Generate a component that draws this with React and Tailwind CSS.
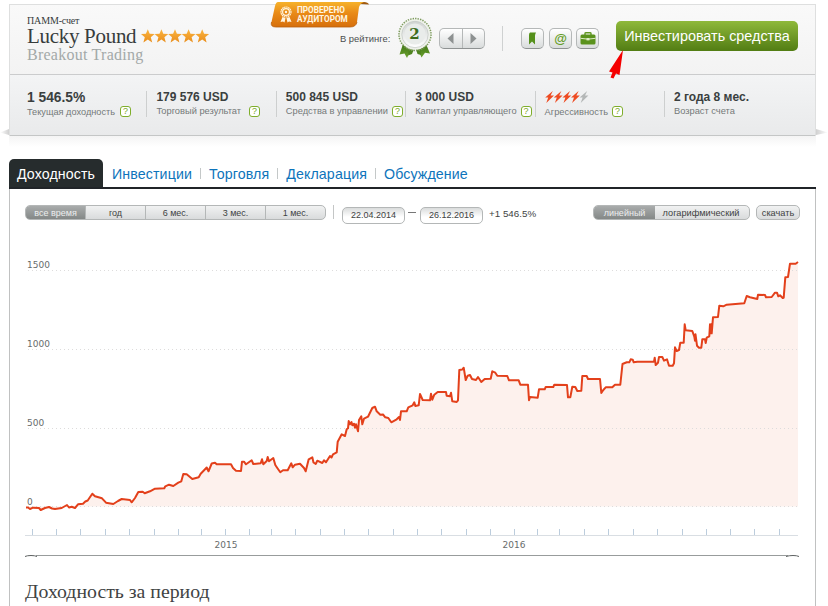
import clsx from 'clsx';

const SANS = "font-['Liberation_Sans',Arial,sans-serif]";
const SERIF = "font-['Liberation_Serif',Georgia,serif]";

const SERIES = `26,507.5 28,507.5 30,509 33,507.7 39,508 40.7,510 45,508 49,507 52,508.5 55,509 61.7,508 67,505 69,507.5 71.7,506.7
75,508 78,504.3 83,503.7 85.3,501.5 87.7,500.5 92.3,493.7 95,496.3 102,498.3 106,502.7 113.3,504 118,501 121.7,499 130,500
131.7,502.3 135,498 138.3,492 142.7,491.7 144.7,493.3 150,491.3 155,488.7 164.3,488.3 165.3,486.3 169,484.7 173.3,486
178.3,482.7 181.3,481.3 183.3,474 186.7,474.3 192.3,479 198.7,477.3 200.7,473.7 206.7,467.5 208.5,471.3 211.7,463.5 215,462.7
216.7,464.3 231,464.3 233,468 236,470.7 241,471 242,461.7 244,461.7 246,464.3 251.7,460.3 253.3,464 260.7,463.3 262,459.3
263.3,464.3 266.7,461 267.7,457 269,461.3 273.3,458 275.3,465 277.3,468 280.3,472.3 283,470.3 287.7,470.3 291.3,463.3
292.7,467.3 295,464.7 300,463.7 304,468 305.7,471.3 308.7,459.3 312.3,457.3 313.5,462.5 315.7,464 317.3,460.7 322.3,463
324,460.3 326,462.3 330,456 331.5,457.5 333,454.3 336.7,452.3 337.7,441.7 341.7,434.3 345,436 346.7,429.3 348,428.3
348.7,421 350,424.3 351.5,422 352.3,425.3 354,423.7 355,427.7 356,424.3 358,431.3 359,420 361.3,416.3 362.3,424.3 364,418.7
368,416.7 372.3,408 375,406.7 376.7,411.3 380.3,414.7 383,414.5 385.3,417.3 388.3,418 391.3,422.3 396.7,419.3 399,417
400,420 401,411.3 406.7,411.3 408.3,407.3 412.7,405.3 414.3,402.3 415.3,406 418.7,405.3 420,394 422.7,400 430,400.3
431,393.7 432.3,399.7 434.3,394.7 437.7,392 446,392 446.7,395.7 450,396.3 451,392.7 452.3,401.3 456.7,402 458,400.3
459.3,370 462.3,369.5 463.7,367.7 465.7,380 467.7,375.7 470,375 472,379 476,380 478,377 481.3,382 484.7,379 490.7,378.7
492.3,371.3 495.3,372.7 497.3,375.7 507.3,376 509,380.3 518.7,380.3 520.3,384.7 528,384.7 529,400.3 530,397 537.7,397.7
539,389.3 544.7,389.3 545.7,387 553.3,387 554.3,384.7 567,385 568,397.3 570.3,397.3 572.3,386.7 575.3,387 577.3,391
581.3,390.7 582.3,376 586.7,376 588,379 600,379 601.3,393 603.3,390 605.7,387.3 612.3,387.3 615,384.7 620.3,384.7
622.5,364 626.7,362.3 629.3,362.3 630.7,359.3 632.7,359.7 633.7,362.3 637.3,361.7 654,361.7 654.7,357.7 655.7,365
658,362.7 659,357 662.3,357 664,360.7 667,359.3 669,365.7 672.7,365.7 674,363.3 675,347.3 676.7,351 679,350 680.3,342.7
683.7,342.7 684.7,324.3 685.7,330.3 692.3,331 694.3,336.7 695,340.7 695.5,334.3 697,345.7 699,347.7 701.3,347.7
702.3,339.3 705,339.3 705.7,343 706.7,337.7 709.3,336.3 710,324.3 710.7,333.3 711.3,324.3 711.7,333.3 713,317.3 718,317
719.3,305.7 723.3,306.3 726.7,304.7 744.3,303.3 746.7,296 750,297.3 757.3,299 758,294.7 765,295 766,297.3 771.7,297
775,292.7 777,292.7 778.3,296.3 780,295.3 782.7,298 783.7,297.7 785.3,277.3 788,277 790,263.7 795.7,263.7 798,262`;

const MONTH_TICKS = [
  32, 56, 80, 105, 129, 154, 178, 201, 225, 249, 271, 295, 320, 344, 368, 393,
  417, 441, 466, 490, 514, 537, 559, 584, 608, 633, 657, 682, 706, 730, 754, 779,
];

const GRID = [
  { y: 270.5, textY: 268, label: '1500' },
  { y: 349.5, textY: 347, label: '1000' },
  { y: 428.5, textY: 426, label: '500' },
  { y: 506.5, textY: 505, label: '0' },
];

const STATS = [
  { value: '1 546.5%', label: 'Текущая доходность', help: true, big: true },
  { value: '179 576 USD', label: 'Торговый результат', help: true },
  { value: '500 845 USD', label: 'Средства в управлении', help: true },
  { value: '3 000 USD', label: 'Капитал управляющего', help: true },
  { label: 'Агрессивность', help: true, bolts: 4 },
  { value: '2 года 8 мес.', label: 'Возраст счета' },
];

const PERIODS = ['все время', 'год', '6 мес.', '3 мес.', '1 мес.'];
const TABS = ['Инвестиции', 'Торговля', 'Декларация', 'Обсуждение'];

function HelpIcon({ className }) {
  return (
    <span
      className={clsx(
        'flex h-[11px] w-[11px] shrink-0 items-center justify-center rounded-[3px] border border-[#7fae2c] bg-white text-[9px] leading-none text-[#79a81f]',
        className
      )}
    >
      ?
    </span>
  );
}

function Stars() {
  return (
    <svg width="69" height="14" viewBox="0 0 69 14" className="shrink-0">
      <defs>
        <linearGradient id="star" x1="0" y1="0" x2="0" y2="1">
          <stop offset="0" stopColor="#fbb540" />
          <stop offset="1" stopColor="#e98d1b" />
        </linearGradient>
      </defs>
      {[0, 1, 2, 3, 4].map((i) => (
        <path
          key={i}
          transform={`translate(${i * 13.6} 0)`}
          fill="url(#star)"
          d="M6.8 0.2 8.7 4.8 13.7 5 9.8 8.3 11.2 13.5 6.8 10.6 2.4 13.5 3.8 8.3 0 5 4.9 4.8Z"
        />
      ))}
    </svg>
  );
}

function Bolts({ count }) {
  return (
    <svg width="44" height="14" viewBox="0 0 44 14" className="block">
      {[0, 1, 2, 3, 4].map((i) => (
        <path
          key={i}
          transform={`translate(${i * 8.6} -1)`}
          fill={i < count ? '#ee4b22' : '#b4b7b7'}
          d="M7.8 1 0.2 7.6 3.2 7.6 1.3 13 9 5.6 5.6 5.6Z"
        />
      ))}
    </svg>
  );
}

function AuditBadge() {
  return (
    <div className="absolute -top-[3px] left-[260px] h-[26px] w-[101px]">
      <svg width="101" height="26" viewBox="0 0 101 26" className="absolute">
        <defs>
          <linearGradient id="badge" x1="0" y1="0" x2="0" y2="1">
            <stop offset="0" stopColor="#f6b22b" />
            <stop offset="0.45" stopColor="#e98a17" />
            <stop offset="1" stopColor="#d66f0c" />
          </linearGradient>
        </defs>
        <path d="M90 0H94Q98 0 99 2.5L91 2Z" fill="#a05a10" />
        <path d="M8 0H94Q90.5 1 89 5L87 20Q86 25 80 25H6Q0 25 1.5 20L5 4Q6 0 8 0Z" fill="url(#badge)" />
        <path d="M1.5 20Q0 25 6 25H80Q86 25 87 20" fill="none" stroke="#b9600d" strokeWidth="0.8" />
        <g fill="none" stroke="#fff6e2">
          <circle cx="16" cy="10" r="5" strokeWidth="1.2" strokeDasharray="1.6 0.5" />
          <circle cx="16" cy="10" r="3.4" strokeWidth="1.2" />
        </g>
        <path d="M12.5 15 10.5 20 13 19.4 14.5 20.6 15.5 16ZM19.5 15 21.5 20 19 19.4 17.5 20.6 16.5 16Z" fill="#fff6e2" />
        <circle cx="16" cy="10" r="1.2" fill="#fff6e2" />
      </svg>
      <div className="relative pt-[4px] pl-[27px] font-[Roboto,sans-serif] text-[8.2px] leading-[8.6px] font-bold whitespace-nowrap text-[#fff6e2]">
        ПРОВЕРЕНО
        <br />
        АУДИТОРОМ
      </div>
    </div>
  );
}

function Medal() {
  return (
    <svg width="36" height="42" viewBox="0 0 36 42" className="shrink-0">
      <defs>
        <linearGradient id="ribbon" x1="0" y1="0" x2="0" y2="1">
          <stop offset="0" stopColor="#3f7416" />
          <stop offset="1" stopColor="#6ba22d" />
        </linearGradient>
        <linearGradient id="disc" x1="0" y1="0" x2="0" y2="1">
          <stop offset="0" stopColor="#cfd3d1" />
          <stop offset="1" stopColor="#ffffff" />
        </linearGradient>
      </defs>
      <path d="M6 27 2.5 37.5 7.5 36.5 10 41 14.5 31ZM29 27 33 36.5 28 35.7 24.5 40.5 20.5 31Z" fill="url(#ribbon)" />
      <path d="M12 31 11 38.5 15 37 17.5 31ZM23.5 31 24 38 20.5 37 18.5 31Z" fill="#4f8420" />
      <circle cx="18" cy="17.5" r="15.5" fill="#eef1ea" />
      <circle cx="18" cy="17.5" r="16" fill="none" stroke="#7d9b5d" strokeWidth="1.5" strokeDasharray="1.4 1.1" />
      <circle cx="18" cy="17.5" r="13.2" fill="url(#disc)" stroke="#c5cac6" strokeWidth="0.8" />
      <circle cx="18" cy="17" r="10.5" fill="#e9ecea" />
      <text x="17.5" y="22" textAnchor="middle" fontFamily="DejaVu Serif" fontWeight="bold" fontSize="15" fill="#3d6c1c">2</text>
    </svg>
  );
}

function ToolButton({ className, children }) {
  return (
    <div
      className={clsx(
        'flex h-[21px] w-[23px] shrink-0 items-center justify-center rounded-[5px] border border-[#b5b8b8] border-b-[#8e9292] bg-linear-to-b from-white to-[#d9dcdc]',
        className
      )}
    >
      {children}
    </div>
  );
}

function Header() {
  return (
    <header className="relative flex h-[70px] items-start border-b border-[#cbcccd] bg-linear-to-b from-[#f9f9f9] to-[#f3f3f3]">
      <div className={clsx('w-[330px] shrink-0 pt-[10px] pl-[17px] text-[#373c3c]', SERIF)}>
        <div className="text-[10px] leading-[11px] tracking-[-0.15px]">ПАММ-счет</div>
        <div className="flex h-[20px] items-center gap-[5px]">
          <h1 className="text-[21px] leading-[20px] tracking-[-0.3px] whitespace-nowrap">Lucky Pound</h1>
          <Stars />
        </div>
        <div className="text-[16px] leading-[18px] tracking-[0.25px] text-[#a3a9a8]">Breakout Trading</div>
      </div>
      <div className="flex items-start pt-[12px]">
        <span className="w-[57px] shrink-0 pt-[16px] text-[9.4px] leading-[12px] whitespace-nowrap text-[#4a4e4e]">В рейтинге:</span>
        <Medal />
        <div className="mt-[11px] ml-[6px] flex h-[21px] w-[46px] shrink-0 rounded-[5px] border border-[#b5b8b8] border-b-[#8e9292] bg-linear-to-b from-white to-[#d9dcdc]">
          <div className="flex flex-1 items-center justify-center border-r border-[#b5b8b8]">
            <svg width="7" height="11" viewBox="0 0 7 11"><path d="M6.5 0V11L0.5 5.5Z" fill="#8d9191" /></svg>
          </div>
          <div className="flex flex-1 items-center justify-center">
            <svg width="7" height="11" viewBox="0 0 7 11"><path d="M0.5 0V11L6.5 5.5Z" fill="#8d9191" /></svg>
          </div>
        </div>
        <div className="mt-[9px] ml-[17px] h-[25px] w-px bg-[#cfd1d1]" />
        <ToolButton className="mt-[11px] ml-[18px]">
          <svg width="9" height="13" viewBox="0 0 9 13"><path d="M2 0.5H8Q7 2 7 4V12.5L4 9.5 1 12.5V3Q1 1 2 0.5Z" fill="#55901b" /></svg>
        </ToolButton>
        <ToolButton className="mt-[11px] ml-[5px]">
          <span className="text-[13px] leading-[14px] font-bold text-[#659d26]">@</span>
        </ToolButton>
        <ToolButton className="mt-[11px] ml-[4px]">
          <svg width="16" height="13" viewBox="0 0 16 13">
            <path d="M5 3V1.5Q5 0.8 6 0.8H10Q11 0.8 11 1.5V3" fill="none" stroke="#5f961f" strokeWidth="1.4" />
            <rect x="0.5" y="2.5" width="15" height="10" rx="1.5" fill="#5a921c" />
            <path d="M0.5 6.3Q8 8 15.5 6.3" stroke="#dcebc6" strokeWidth="1" fill="none" />
            <rect x="6.5" y="6" width="3" height="2.4" fill="#dcebc6" />
          </svg>
        </ToolButton>
        <button className="mt-[4px] ml-[17px] h-[30px] w-[182px] shrink-0 rounded-[5px] bg-linear-to-b from-[#8fb93a] to-[#527d13] text-[14.4px] leading-[30px] whitespace-nowrap text-white">
          Инвестировать средства
        </button>
      </div>
      <AuditBadge />
    </header>
  );
}

function Stats() {
  return (
    <section className="flex h-[61px] border-b border-[#c4c6c6] bg-linear-to-b from-[#f3f4f5] to-[#e9eaeb] pt-[16px] pl-[7px]">
      {STATS.map((stat, i) => (
        <div
          key={stat.label}
          className={clsx(
            'h-[26px] w-[129.4px] shrink-0 border-l pl-[9px] whitespace-nowrap',
            i === 0 ? 'border-transparent' : 'border-[#cdcfcf]'
          )}
        >
          <div
            className={clsx(
              'leading-[12px] font-bold text-[#3a3f3f]',
              stat.big || stat.bolts ? 'h-[15px]' : 'h-[14px]',
              stat.big ? 'pt-px text-[13.8px]' : 'text-[12px]'
            )}
          >
            {stat.bolts ? <Bolts count={stat.bolts} /> : stat.value}
          </div>
          <div
            className={clsx(
              'flex leading-[12px] text-[#747979]',
              stat.big ? 'gap-[5px] text-[9.2px]' : 'text-[9.3px]',
              i === 1 && 'gap-[8px]',
              i > 1 && 'gap-[4px]'
            )}
          >
            {stat.label}
            {stat.help && <HelpIcon className={stat.big || stat.bolts ? 'mt-0' : 'mt-px'} />}
          </div>
        </div>
      ))}
    </section>
  );
}

function Toolbar() {
  return (
    <div className="flex h-[35px] items-start pt-[16px] pl-[15px] text-[9px] text-[#3e4242]">
      <div className="flex h-[15px] w-[301px] overflow-hidden rounded-[5px] border border-[#b4b7b7] bg-linear-to-b from-[#f1f2f2] to-[#d9dbdc] leading-[14px]">
        {PERIODS.map((period, i) => (
          <div
            key={period}
            className={clsx(
              'flex-1 text-center',
              i === 0 ? 'bg-linear-to-b from-[#a9acac] to-[#848887] text-[#eceeee]' : 'border-l border-[#b4b7b7]'
            )}
          >
            {period}
          </div>
        ))}
      </div>
      <div className="ml-[7px] h-[14px] w-px bg-[#c4c6c6]" />
      <div className="mt-[2px] ml-[8px] h-[17px] w-[63px] rounded-[5px] border border-[#b4b7b7] bg-linear-to-b from-[#dadcdc] to-white to-60% text-center leading-[14px]">
        22.04.2014
      </div>
      <div className="mt-[7px] mr-[4px] ml-[3px] h-px w-[8px] bg-[#777]" />
      <div className="mt-[2px] h-[17px] w-[63px] rounded-[5px] border border-[#b4b7b7] bg-linear-to-b from-[#dadcdc] to-white to-60% text-center leading-[14px]">
        26.12.2016
      </div>
      <div className="mt-[2px] ml-[6px] text-[9.8px] leading-[13px]">+1 546.5%</div>
      <div className="mr-[6px] ml-auto flex h-[15px] w-[157px] overflow-hidden rounded-[5px] border border-[#b4b7b7] bg-linear-to-b from-[#f1f2f2] to-[#d9dbdc] text-center leading-[14px]">
        <div className="w-[61px] bg-linear-to-b from-[#a9acac] to-[#848887] text-[#eceeee]">линейный</div>
        <div className="flex-1 pr-[2px] text-[9.2px]">логарифмический</div>
      </div>
      <div className="mr-[15px] h-[15px] w-[44px] rounded-[5px] border border-[#b4b7b7] bg-linear-to-b from-[#f1f2f2] to-[#d9dbdc] text-center text-[9.2px] leading-[14px]">
        скачать
      </div>
    </div>
  );
}

function Chart() {
  return (
    <svg width="775" height="336" viewBox="25 224 775 336" className="ml-[15px] block">
      <polygon points={`26,506.5 ${SERIES} 798,506.5`} fill="#fdf1ed" />
      {GRID.map(({ y, textY, label }) => (
        <g key={label}>
          <line x1="28" x2="798" y1={y} y2={y} stroke="#dddcdc" strokeDasharray="1 3" />
          <text x="27" y={textY} fontFamily="DejaVu Sans" fontSize="9" fill="#686c6c">{label}</text>
        </g>
      ))}
      <polyline points={SERIES} fill="none" stroke="#e3401b" strokeWidth="2" strokeLinejoin="round" />
      <line x1="25" x2="798" y1="535.5" y2="535.5" stroke="#d9dee3" />
      {MONTH_TICKS.map((x) => (
        <line key={x} x1={x + 0.5} x2={x + 0.5} y1="529" y2="535" stroke="#bccddd" />
      ))}
      <g fontFamily="DejaVu Sans" fontSize="9" fill="#686c6c" textAnchor="middle">
        <text x="226" y="548">2015</text>
        <text x="514" y="548">2016</text>
      </g>
      <path d="M36 555.5H788" stroke="#989c9c" />
      <path d="M25 556.5Q27 555.5 31 555.5T37 556.5M786 556.5Q789 555.5 793 555.5T799 556.5" fill="none" stroke="#5d6161" />
    </svg>
  );
}

export default function App() {
  return (
    <div className={clsx('relative h-[606px] w-[828px] overflow-hidden bg-white', SANS)}>
      <div className="ml-[9px] w-[807px] pt-[4px]">
        <div className="border border-b-0 border-[#dedfdf]">
          <Header />
          <Stats />
        </div>
        <div className="h-[11px] bg-linear-to-b from-[#f4f4f4] to-white" />

        <nav className="mt-[12px] flex h-[30px] items-start border-b-2 border-[#202428] text-[14.2px] leading-[31px] tracking-[0.12px] text-[#0d74bb]">
          <div className="mr-[9px] h-[28px] w-[94px] rounded-t-[5px] bg-[#262c2d] text-center whitespace-nowrap text-white">
            Доходность
          </div>
          {TABS.map((tab, i) => (
            <div key={tab} className="flex items-start whitespace-nowrap">
              {i > 0 && <span className="mt-[9px] mr-[8px] ml-[8px] h-[11px] w-px bg-[#c4c8c8]" />}
              {tab}
            </div>
          ))}
        </nav>

        <main className="h-[420px] border-x border-[#c0c1c1]">
          <Toolbar />
          <Chart />
          <h2 className={clsx('mt-[19px] ml-[15px] text-[19.8px] leading-[24px] text-[#3f4343]', SERIF)}>
            Доходность за период
          </h2>
        </main>
      </div>

      {/* curled card corners */}
      <div className="absolute top-[129px] left-0 h-[6px] w-[9px] bg-linear-to-l from-[#d0d0d0] to-white [clip-path:polygon(100%_0,100%_100%,0_60%)]" />
      <div className="absolute top-[129px] left-[816px] h-[6px] w-[12px] bg-linear-to-r from-[#d0d0d0] to-white [clip-path:polygon(0_0,0_100%,100%_60%)]" />

      {/* pointer to the invest button */}
      <svg width="16" height="30" viewBox="0 0 16 30" className="absolute top-[50px] left-[608px]">
        <path d="M15 0 11.5 25 8 23.5 5.5 28.5 2.5 27.5 4.5 22.5 1 21.5Z" fill="#f40000" />
      </svg>
    </div>
  );
}
